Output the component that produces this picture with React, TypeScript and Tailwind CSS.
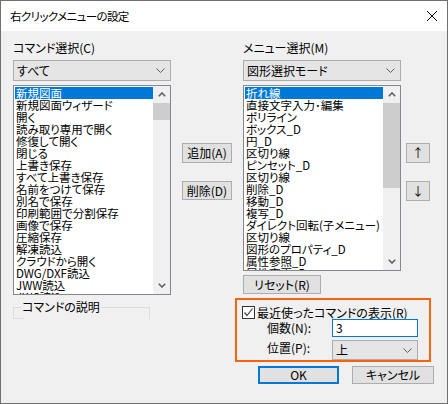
import React from "react";

const leftItems = [
  "新規図面",
  "新規図面ウィザード",
  "開く",
  "読み取り専用で開く",
  "修復して開く",
  "閉じる",
  "上書き保存",
  "すべて上書き保存",
  "名前をつけて保存",
  "別名で保存",
  "印刷範囲で分割保存",
  "画像で保存",
  "圧縮保存",
  "解凍読込",
  "クラウドから開く",
  "DWG/DXF読込",
  "JWW読込",
  "JWC読込",
];

const rightItems = [
  "折れ線",
  "直接文字入力･編集",
  "ポリライン",
  "ボックス_D",
  "円_D",
  "区切り線",
  "ピンセット_D",
  "区切り線",
  "削除_D",
  "移動_D",
  "複写_D",
  "ダイレクト回転(子メニュー)",
  "区切り線",
  "図形のプロパティ_D",
  "属性参照_D",
  "属性変更_D",
];

function Chevron() {
  return (
    <svg width="9" height="5" viewBox="0 0 9 5" className="shrink-0">
      <polyline points="0.5,0.5 4.5,4.5 8.5,0.5" fill="none" stroke="#606060" strokeWidth="1" />
    </svg>
  );
}

function Combo({ text, className }: { text: string; className?: string }) {
  return (
    <div
      className={`h-[21px] border border-[#adadad] bg-[#e5e5e5] flex items-center justify-between pl-[3px] pr-[5px] ${className ?? ""}`}
    >
      <span className="leading-[12px]">{text}</span>
      <Chevron />
    </div>
  );
}

function ScrollBar({ thumb }: { thumb: string }) {
  return (
    <div className="w-[17px] flex flex-col bg-[#f0f0f0] shrink-0">
      <div className="h-[17px] flex items-center justify-center">
        <svg width="8" height="5" viewBox="0 0 8 5">
          <polyline points="0.8,4.2 4,1 7.2,4.2" fill="none" stroke="#606060" strokeWidth="1.6" />
        </svg>
      </div>
      <div className="flex-1">
        <div className={`bg-[#cdcdcd] ${thumb}`} />
      </div>
      <div className="h-[17px] flex items-center justify-center">
        <svg width="8" height="5" viewBox="0 0 8 5">
          <polyline points="0.8,0.8 4,4 7.2,0.8" fill="none" stroke="#606060" strokeWidth="1.6" />
        </svg>
      </div>
    </div>
  );
}

function ListBox({ items, className, thumb }: { items: string[]; className: string; thumb: string }) {
  return (
    <div className={`flex border border-[#828790] bg-white ${className}`}>
      <div className="flex-1 overflow-hidden pl-[1px] pt-[1px] text-[11.5px]">
        {items.map((t, i) => (
          <div
            key={i}
            className={`h-[12px] leading-[12px] pl-[1px] whitespace-nowrap ${
              i === 0 ? "bg-[#0078d7] text-white" : "text-black"
            }`}
          >
            {t}
          </div>
        ))}
      </div>
      <ScrollBar thumb={thumb} />
    </div>
  );
}

function Button({ children, className }: { children: React.ReactNode; className?: string }) {
  return (
    <div
      className={`border border-[#adadad] bg-[#e1e1e1] flex items-center justify-center leading-[12px] ${className ?? ""}`}
    >
      {children}
    </div>
  );
}

export default function App() {
  return (
    <div className="w-[448px] h-[404px] border border-[#707070] bg-[#f0f0f0] flex flex-col text-[12px] text-black overflow-hidden font-['Noto_Sans_CJK_JP','Noto_Sans',sans-serif] [font-feature-settings:'palt']">
      {/* title bar */}
      <div className="h-[30px] bg-white flex items-center justify-between pl-[9px] pr-[10px] shrink-0">
        <span className="leading-[12px] text-[11.5px] tracking-[-0.6px]">右クリックメニューの設定</span>
        <svg width="10" height="10" viewBox="0 0 10 10">
          <line x1="0" y1="0" x2="10" y2="10" stroke="#000" strokeWidth="1" />
          <line x1="10" y1="0" x2="0" y2="10" stroke="#000" strokeWidth="1" />
        </svg>
      </div>

      <div className="flex pl-[12px] pt-[11px]">
        {/* left column */}
        <div className="w-[158px] flex flex-col shrink-0">
          <div className="h-[12px] leading-[12px]">コマンド選択(C)</div>
          <Combo text="すべて" className="mt-[6px]" />
          <ListBox items={leftItems} className="mt-[4px] h-[210px]" thumb="h-[17px]" />
          <div className="relative mt-[12px] w-[137px] h-[12px] border-t border-l border-r border-[#dcdcdc]">
            <span className="absolute left-[7px] top-[-7px] px-[1px] bg-[#f0f0f0] leading-[12px]">
              コマンドの説明
            </span>
            <div className="absolute left-[-1px] bottom-0 w-[11px] h-[1px] bg-[#dcdcdc]" />
          </div>
        </div>

        {/* middle buttons */}
        <div className="w-[50px] ml-[11px] flex flex-col shrink-0">
          <Button className="mt-[101px] h-[20px]">追加(A)</Button>
          <Button className="mt-[18px] h-[19px]">削除(D)</Button>
        </div>

        {/* right section */}
        <div className="ml-[3px] w-[200px] flex flex-col shrink-0">
          <div className="flex pl-[8px]">
            <div className="w-[158px] flex flex-col shrink-0">
              <div className="h-[12px] leading-[12px]">メニュー選択(M)</div>
              <Combo text="図形選択モード" className="mt-[6px]" />
              <ListBox items={rightItems} className="mt-[4px] h-[186px]" thumb="h-[85px]" />
              <Button className="mt-[4px] h-[19px] w-[78px]">リセット(R)</Button>
            </div>
            <div className="ml-[5px] w-[24px] flex flex-col shrink-0">
              <Button className="mt-[101px] h-[20px]">↑</Button>
              <Button className="mt-[18px] h-[20px]">↓</Button>
            </div>
          </div>

          {/* orange box */}
          <div className="mt-[4px] w-[196px] border-2 border-[#f7630c] flex flex-col pt-[6px]">
            <div className="h-[13px] flex items-center pl-[5px]">
              <div className="w-[13px] h-[13px] border border-[#333333] bg-white flex items-center justify-center shrink-0">
                <svg width="11" height="11" viewBox="0 0 11 11">
                  <polyline points="1.5,5.5 4,8.5 9.5,1.5" fill="none" stroke="#444444" strokeWidth="1.2" />
                </svg>
              </div>
              <span className="ml-[2px] leading-[12px]">最近使ったコマンドの表示(R)</span>
            </div>
            <div className="h-[18px] flex items-center pl-[30px]">
              <span className="w-[65px] leading-[12px]">個数(N):</span>
              <div className="w-[86px] h-[18px] border border-[#0078d7] bg-white flex items-center pl-[3px] leading-[12px]">
                3
              </div>
            </div>
            <div className="mt-[3px] h-[20px] flex items-center pl-[30px]">
              <span className="w-[65px] leading-[12px] mb-[4px]">位置(P):</span>
              <div className="w-[86px] h-[20px] border border-[#adadad] bg-[#e5e5e5] flex items-center justify-between pl-[3px] pr-[5px]">
                <span className="leading-[12px]">上</span>
                <Chevron />
              </div>
            </div>
          </div>

          {/* OK / cancel */}
          <div className="mt-[4px] flex">
            <div className="ml-[23px] w-[81px] h-[18px] border-2 border-[#0078d7] bg-[#e1e1e1] flex items-center justify-center leading-[12px]">
              OK
            </div>
            <Button className="ml-[13px] w-[82px] h-[18px]">キャンセル</Button>
          </div>
        </div>
      </div>
    </div>
  );
}
